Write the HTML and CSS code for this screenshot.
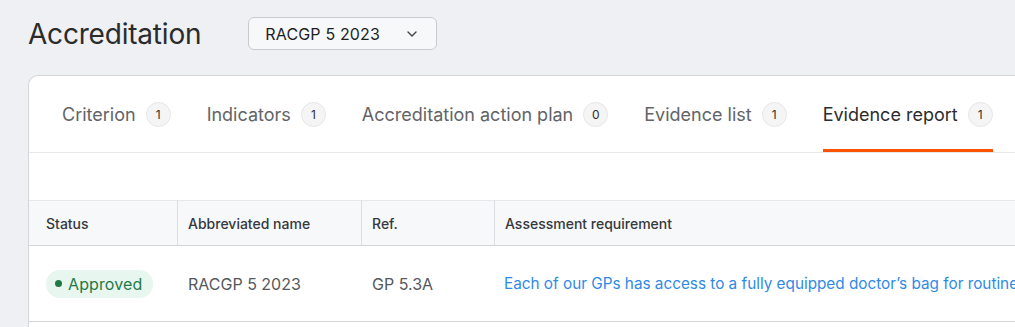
FILE: index.html
```html
<!DOCTYPE html>
<html>
<head>
<meta charset="utf-8">
<link rel="stylesheet" href="styles.css">
</head>
<body>
<div class="page">
  <header class="top">
    <h1 class="title">Accreditation</h1>
    <button class="select">
      <span>RACGP 5 2023</span>
      <svg class="chev" width="12" height="8" viewBox="0 0 12 8"><path d="M2 2l4 4 4-4" fill="none" stroke="#444" stroke-width="1.4" stroke-linecap="round" stroke-linejoin="round"/></svg>
    </button>
  </header>
  <section class="card">
    <nav class="tabs">
      <div class="tab"><span>Criterion</span><span class="badge">1</span></div>
      <div class="tab"><span>Indicators</span><span class="badge">1</span></div>
      <div class="tab"><span>Accreditation action plan</span><span class="badge">0</span></div>
      <div class="tab"><span>Evidence list</span><span class="badge">1</span></div>
      <div class="tab active"><span>Evidence report</span><span class="badge">1</span></div>
    </nav>
    <div class="spacer"></div>
    <div class="table">
      <div class="th first">Status</div>
      <div class="th">Abbreviated name</div>
      <div class="th">Ref.</div>
      <div class="th last">Assessment requirement</div>
      <div class="td first"><span class="pill"><span class="dot"></span>Approved</span></div>
      <div class="td">RACGP 5 2023</div>
      <div class="td">GP 5.3A</div>
      <div class="td last link"><span class="clip">Each of our GPs has access to a fully equipped doctor’s bag for routine</span></div>
    </div>
  </section>
</div>
</body>
</html>
```

FILE: styles.css
```css
html, body {
  margin: 0;
  padding: 0;
}
body {
  background: #eef0f4;
  font-family: "Inter", "Liberation Sans", sans-serif;
  overflow: hidden;
  width: 1015px;
  height: 327px;
}
.page {
  padding: 17px 0 0 28px;
}
.top {
  display: flex;
  align-items: center;
  height: 33px;
}
.title {
  margin: 0;
  font-size: 28px;
  font-weight: 400;
  color: #2b2b2b;
  letter-spacing: -0.2px;
}
.select {
  margin-left: 47px;
  width: 189px;
  height: 33px;
  box-sizing: border-box;
  border: 1px solid #c9cbcf;
  border-radius: 6px;
  background: #f7f8fa;
  display: flex;
  align-items: center;
  padding: 0 16px;
  font-family: inherit;
  font-size: 16px;
  letter-spacing: 0.15px;
  color: #1f1f1f;
  gap: 26px;
}
.chev { margin-top: 1px; }
.card {
  margin-top: 25px;
  background: #fff;
  border: 1px solid #d4d6da;
  border-right: none;
  border-bottom: none;
  border-radius: 10px 0 0 0;
  height: 251px;
  overflow: hidden;
}
.tabs {
  display: flex;
  gap: 36px;
  padding-left: 33px;
  height: 76px;
  border-bottom: 1px solid #e8e9eb;
}
.tab {
  display: flex;
  align-items: center;
  gap: 10px;
  font-size: 18px;
  color: #626466;
  box-sizing: border-box;
  border-bottom: 3px solid transparent;
  padding-top: 3px;
  white-space: nowrap;
}
.tab.active {
  color: #2c2c2c;
  border-bottom-color: #ff5300;
}
.badge {
  width: 25px;
  height: 25px;
  box-sizing: border-box;
  border-radius: 50%;
  background: #f5f5f6;
  border: 1px solid #e6e6e8;
  font-size: 12px;
  color: #2e2e2e;
  display: flex;
  align-items: center;
  justify-content: center;
}
.spacer {
  height: 47px;
}
.table {
  display: grid;
  grid-template-columns: 149px 184px 133px 1fr;
}
.th {
  height: 46px;
  box-sizing: border-box;
  background: #f7f8fa;
  border-top: 1px solid #e6e7e9;
  border-bottom: 1px solid #d3d5d8;
  border-right: 1px solid #dcdee1;
  display: flex;
  align-items: center;
  padding-left: 10px;
  font-size: 14px;
  font-weight: 500;
  color: #35383c;
}
.th.first, .td.first { padding-left: 17px; }
.th.last { border-right: none; }
.td {
  height: 76px;
  box-sizing: border-box;
  border-bottom: 1px solid #d3d5d8;
  display: flex;
  align-items: center;
  padding-left: 10px;
  font-size: 16px;
  color: #55585c;
  white-space: nowrap;
  min-width: 0;
}
.td.link {
  color: #2f8ae6;
  font-size: 15.3px;
  padding-left: 9px;
}
.clip {
  display: block;
  overflow: hidden;
}
.pill {
  display: inline-flex;
  align-items: center;
  gap: 6px;
  height: 28px;
  padding: 0 11px 0 9px;
  border-radius: 14px;
  background: #e7f6ee;
  color: #1f7a48;
  font-size: 16px;
  letter-spacing: 0.1px;
}
.dot {
  width: 7px;
  height: 7px;
  border-radius: 50%;
  background: #1f7a48;
}
```
